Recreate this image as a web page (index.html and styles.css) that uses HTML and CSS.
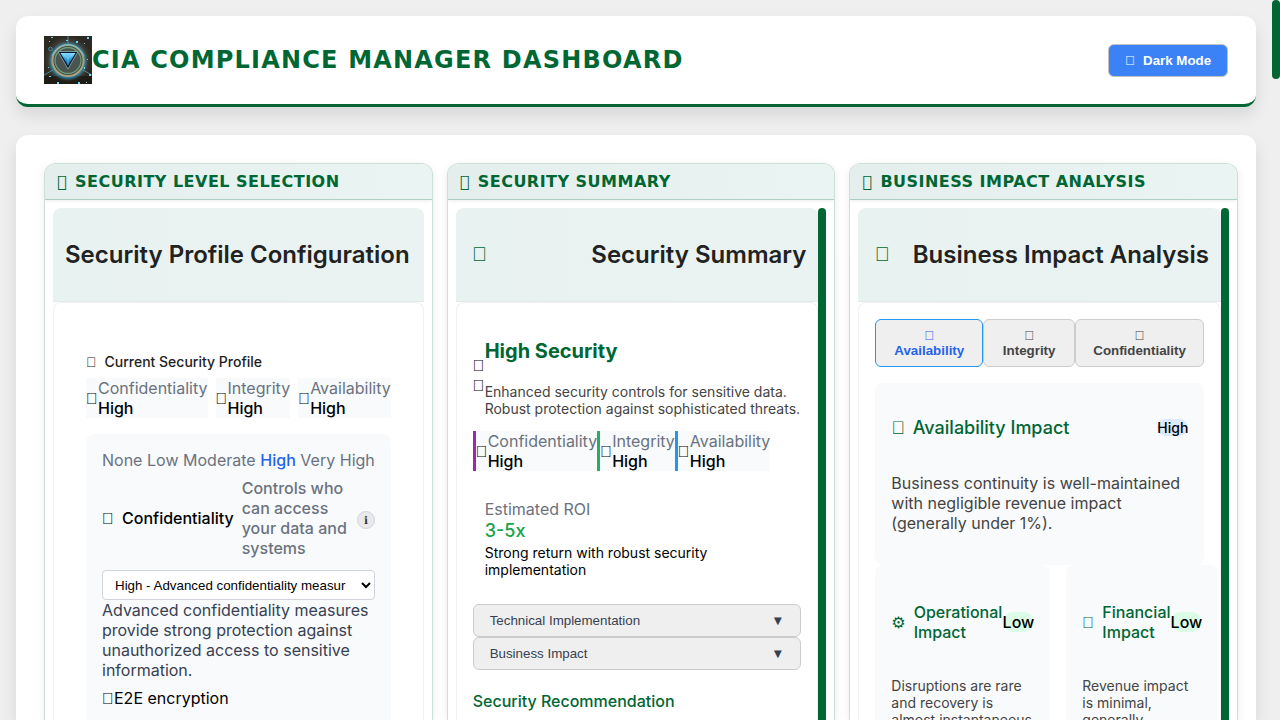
FILE: index.html
```html
<!DOCTYPE html>
<html lang="en">
<head>
<meta charset="utf-8">
<title>CIA Compliance Manager Dashboard</title>
<link rel="stylesheet" href="styles.css">
</head>
<body>
<header class="app-header">
  <svg class="logo" viewBox="0 0 48 48">
    <defs>
      <radialGradient id="bg"><stop offset="0" stop-color="#67777a"/><stop offset=".65" stop-color="#4b4a42"/><stop offset="1" stop-color="#2b2922"/></radialGradient>
      <radialGradient id="glow"><stop offset=".6" stop-color="#2ba8d8" stop-opacity=".1"/><stop offset=".8" stop-color="#35a5d0" stop-opacity=".75"/><stop offset="1" stop-color="#2496c8" stop-opacity="0"/></radialGradient>
      <linearGradient id="tri" x2="0" y2="1"><stop offset="0" stop-color="#8bdcff"/><stop offset=".5" stop-color="#2a9fe0"/><stop offset="1" stop-color="#0b4f86"/></linearGradient>
    </defs>
    <rect width="48" height="48" fill="url(#bg)"/>
    <rect y="40" width="48" height="8" fill="#17140f" opacity=".6"/>
    <path d="M24 0V10M0 39L9 34M48 39L39 34" stroke="#5fc0e0" opacity=".6"/>
    <circle cx="24" cy="25" r="20" fill="url(#glow)"/>
    <circle cx="24" cy="24.500" r="15.500" fill="#34403f" stroke="#a99f7b" stroke-width="2"/>
    <circle cx="24" cy="24.500" r="13" fill="#4a5450" stroke="#6f9b77" stroke-width="1.300"/>
    <path d="M8 20A17 17 0 0 1 40 20" fill="none" stroke="#65cdea" stroke-width=".8"/>
    <path d="M14 15.500H34L24 33Z" fill="#0b1725" stroke="#8ab4bc" stroke-width=".8"/>
    <path d="M16.500 17H31.500L24 29.500Z" fill="url(#tri)"/>
    <path d="M17 17L24 22L31 17M24 22V29" fill="none" stroke="#a6e2f8" stroke-width=".5"/>
    <g fill="#67d5f3"><path d="M7 1h2v1H7zM22 4h2v1h-2zM32 5h2v2h-2zM43 1h2v2h-2zM40 7h1v1h-1zM5 5h1v1H5zM13 46h2v2h-2zM34 46h2v2h-2zM45 38h2v2h-2zM42 46h1v1h-1zM5 40h2v1H5zM4 31h1v1H4zM43 23h1v1h-1zM40 31h1v2h-1z"/></g>
    <circle cx="6.500" cy="13" r="1.800" fill="none" stroke="#318eae"/>
  </svg>
  <h1 class="app-title">CIA Compliance Manager Dashboard</h1>
  <button class="theme-btn"><span class="icon">&#xF0000;</span>Dark Mode</button>
</header>

<main class="board">
  <section class="widget">
    <h2 class="widget-title"><span class="widget-icon">&#xF0000;</span>Security Level Selection</h2>
    <div class="widget-content">
      <div class="pane">
        <div class="pane-head"><h3 class="pane-title">Security Profile Configuration</h3></div>
        <div class="pane-body profile">
          <div class="profile-head"><span class="icon">&#xF0000;</span>Current Security Profile</div>
          <div class="chips spaced">
            <div class="chip"><span class="icon">&#xF0000;</span><div><div class="chip-label">Confidentiality</div><div class="chip-value">High</div></div></div>
            <div class="chip"><span class="icon">&#xF0000;</span><div><div class="chip-label">Integrity</div><div class="chip-value">High</div></div></div>
            <div class="chip"><span class="icon">&#xF0000;</span><div><div class="chip-label">Availability</div><div class="chip-value">High</div></div></div>
          </div>
          <div class="level-box">
            <div class="levels">None Low Moderate <b class="level-active">High</b> Very High</div>
            <div class="level-row">
              <span class="icon">&#xF0000;</span><span class="level-name">Confidentiality</span>
              <span class="level-help">Controls who can access your data and systems</span>
              <span class="info">ℹ</span>
            </div>
            <select class="level-select"><option>High - Advanced confidentiality measures</option></select>
            <p class="level-text">Advanced confidentiality measures provide strong protection against unauthorized access to sensitive information.</p>
            <div class="level-tag"><span class="icon">&#xF0000;</span>E2E encryption</div>
          </div>
        </div>
      </div>
    </div>
  </section>

  <section class="widget">
    <h2 class="widget-title"><span class="widget-icon">&#xF0000;</span>Security Summary</h2>
    <div class="widget-content">
      <div class="pane">
        <div class="pane-head iconed"><span class="icon pane-icon">&#xF0000;</span><h3 class="pane-title">Security Summary</h3></div>
        <div class="pane-body summary">
          <div class="overview">
            <div class="icon overview-icon">&#xF0000;<br>&#xF0000;</div>
            <div>
              <h4 class="overview-title">High Security</h4>
              <p class="overview-text">Enhanced security controls for sensitive data. Robust protection against sophisticated threats.</p>
            </div>
          </div>
          <div class="chips">
            <div class="chip edge purple"><span class="icon">&#xF0000;</span><div><div class="chip-label">Confidentiality</div><div class="chip-value">High</div></div></div>
            <div class="chip edge green"><span class="icon">&#xF0000;</span><div><div class="chip-label">Integrity</div><div class="chip-value">High</div></div></div>
            <div class="chip edge blue"><span class="icon">&#xF0000;</span><div><div class="chip-label">Availability</div><div class="chip-value">High</div></div></div>
          </div>
          <div class="roi">
            <div class="chip-label">Estimated ROI</div>
            <div class="roi-value">3-5x</div>
            <div class="roi-text">Strong return with robust security implementation</div>
          </div>
          <button class="fold"><span>Technical Implementation</span><span class="arrow">▼</span></button>
          <button class="fold"><span>Business Impact</span><span class="arrow">▼</span></button>
          <h4 class="recommend">Security Recommendation</h4>
        </div>
      </div>
      <div class="scroll-thumb"></div>
    </div>
  </section>

  <section class="widget">
    <h2 class="widget-title"><span class="widget-icon">&#xF0000;</span>Business Impact Analysis</h2>
    <div class="widget-content">
      <div class="pane">
        <div class="pane-head iconed"><span class="icon pane-icon">&#xF0000;</span><h3 class="pane-title">Business Impact Analysis</h3></div>
        <div class="pane-body impact">
          <div class="tabs">
            <button class="tab tab-a active"><span class="icon tab-icon">&#xF0000;</span>Availability</button>
            <button class="tab tab-i"><span class="icon tab-icon">&#xF0000;</span>Integrity</button>
            <button class="tab tab-c"><span class="icon tab-icon">&#xF0000;</span>Confidentiality</button>
          </div>
          <div class="impact-card">
            <div class="impact-head"><span class="icon">&#xF0000;</span><h4 class="impact-title">Availability Impact</h4><span class="badge info-badge">High</span></div>
            <p class="impact-text">Business continuity is well-maintained with negligible revenue impact (generally under 1%).</p>
          </div>
          <div class="impact-grid">
            <div class="sub-card">
              <div class="sub-head"><span class="sub-icon gear">⚙</span><h5 class="sub-title">Operational Impact</h5><span class="badge">Low</span></div>
              <p class="sub-text">Disruptions are rare and recovery is almost instantaneous.</p>
            </div>
            <div class="sub-card">
              <div class="sub-head"><span class="icon sub-icon">&#xF0000;</span><h5 class="sub-title">Financial Impact</h5><span class="badge">Low</span></div>
              <p class="sub-text">Revenue impact<br>is minimal,<br>generally</p>
            </div>
          </div>
        </div>
      </div>
      <div class="scroll-thumb"></div>
    </div>
  </section>
</main>
<div class="page-thumb"></div>
</body>
</html>
```
FILE: styles.css
```css
* { box-sizing: border-box; }
html, body { height: 720px; overflow: hidden; }
body { margin: 0; padding: 16px 24px 0 16px; background: #efefef; color: #000; font: 16px/20px Inter, sans-serif; }
h1, h2, h3, h4, h5, p { margin: 0; }
button { font: 13.333px/15px "Liberation Sans", Arial, sans-serif; }
.icon { font-family: "Liberation Sans", Arial, sans-serif; font-weight: 400; }

.app-header { display: flex; align-items: center; height: 91px; padding: 20px 28px; background: #fff; border-bottom: 3px solid #006633; border-radius: 12px; box-shadow: 0 8px 16px rgba(0,0,0,.1); }
.logo { width: 48px; height: 48px; flex: none; }
.app-title { flex: 1; color: #006633; font: bold 24px/28px "DejaVu Sans", sans-serif; letter-spacing: 1.2px; text-transform: uppercase; }
.theme-btn { display: flex; align-items: center; gap: 8px; height: 33px; width: 120px; padding: 0 16px; border: 1px solid #c4c4c4; border-radius: 6px; background: #3b82f6; color: #fff; font-weight: bold; white-space: nowrap; }

.board { display: grid; grid-template-columns: repeat(3, 388.67px); gap: 14px; height: 585px; margin-top: 28px; padding: 28px 28px 0; background: #fff; border-radius: 12px 12px 0 0; box-shadow: 0 8px 16px rgba(0,0,0,.1); }
.widget { display: flex; flex-direction: column; border: 1px solid rgba(0,102,51,.2); border-bottom: 0; border-radius: 12px 12px 0 0; background: #fff; box-shadow: 0 2px 8px rgba(0,0,0,.08); overflow: hidden; min-height: 0; }
.widget-title { display: flex; align-items: center; gap: 8px; height: 36px; padding: 0 12px; background: linear-gradient(90deg, #e4eeec, #eaf4f2); border-bottom: 1px solid rgba(0,102,51,.25); box-shadow: 0 1px 3px rgba(0,0,0,.07); color: #006633; font: bold 16px/20px "DejaVu Sans", sans-serif; letter-spacing: .48px; text-transform: uppercase; flex: none; }
.widget-icon { font-weight: normal; }
.widget-content { display: flex; flex: 1; min-height: 0; padding: 8px 8px 0; }
.pane { flex: 1; min-width: 0; display: flex; flex-direction: column; }
.pane-head { display: flex; align-items: center; flex: none; height: 94px; padding: 0 12px; background: linear-gradient(90deg, #e8f2f0, #eaf3f2); border-bottom: 1px solid #e2eae9; border-radius: 8px 8px 0 0; }
.pane-head.iconed { justify-content: space-between; padding-left: 16px; }
.pane-icon { padding: 0 0 2px .4px; color: #006633; font-size: 20px; }
.pane-title { color: #222; font-size: 24px; line-height: 30px; font-weight: 600; white-space: nowrap; }
.pane-body { flex: 1; min-height: 0; border: 1px solid #f0f2f2; border-bottom: 0; border-radius: 8px 8px 0 0; }
.scroll-thumb { width: 8px; border-radius: 4px 4px 0 0; background: #006633; }
.page-thumb { position: fixed; top: 0; right: 0; width: 8px; height: 79px; border-radius: 4px; background: #006633; }

.profile { padding: 49px 32px 0; display: flex; flex-direction: column; }
.profile-head { display: flex; gap: 8px; color: #222; font-size: 14px; font-weight: 500; }
.chips { display: flex; }
.chips.spaced { gap: 8px; margin: 6px 0 16px; }
.chip { display: flex; align-items: center; height: 40px; background: #f8fafc; white-space: nowrap; }
.chip > .icon, .level-row > .icon { padding-top: 2px; }
.chip.edge { border-left: 3px solid; }
.chip.purple { border-color: #9c27b0; }
.chip.green { border-color: #27ae60; }
.chip.blue { border-color: #2196f3; }
.chip-label { color: #6b7280; }
.chip-value { font-weight: 500; }
.level-box { width: 305px; flex: 1; padding: 16px 16px 0; border-radius: 8px 8px 0 0; background: #f8fafc; }
.levels { color: #6b7280; white-space: nowrap; word-spacing: .1px; }
.level-active { color: #2563eb; font-weight: 500; }
.level-row { display: flex; align-items: center; gap: 8px; margin: 8px 0 12px; font-weight: 500; }
.level-help { flex: 1; color: #6b7280; }
.info { width: 18px; height: 18px; margin-top: 4px; border: 1px solid #d5d5d5; border-radius: 50%; background: #e9e9e9; color: #333; font: bold 10.500px/16px "DejaVu Sans", sans-serif; text-align: center; }
.level-select { display: block; width: 273px; height: 30px; padding: 0 12px 0 8px; border: 1px solid #d1d5db; border-radius: 4px; background: #fff; color: #000; font: 13.333px "Liberation Sans", Arial, sans-serif; }
.level-text { color: #374151; }
.level-tag { display: flex; margin-top: 8px; }
.level-tag > .icon { padding-top: 1px; }

.summary { padding: 36px 16px 0; }
.overview { display: flex; align-items: center; }
.overview-icon { width: 12px; margin-top: -4px; }
.overview-title { color: #006633; font-size: 20px; line-height: 24px; font-weight: 700; }
.overview-text { margin: 20px -8px 0 0; color: #444; font-size: 14px; line-height: 17px; }
.summary .chips { margin-top: 14px; }
.roi { margin-top: 28px; padding: 0 12px; }
.roi-value { color: #16a34a; font-size: 18px; line-height: 23px; font-weight: 500; }
.roi-text { margin: 2px 0 26px; font-size: 14px; line-height: 17px; }
.fold { display: flex; justify-content: space-between; align-items: center; width: 328px; height: 33px; padding: 0 16px; border: 1px solid #ccc; border-radius: 6px; background: #efefef; color: #374151; }
.arrow { margin-right: -.8px; }
.recommend { margin-top: 21px; color: #006633; font-size: 16px; font-weight: 500; }

.impact { padding: 16px 16px 0; display: flex; flex-direction: column; }
.tabs { display: flex; flex: none; }
.tab { height: 48px; padding: 0; border: 1px solid #ccc; border-radius: 6px; background: #efefef; color: #444; font-weight: bold; }
.tab.active { border-color: #2196f3; color: #2563eb; }
.tab-icon { display: block; }
.tab-a { width: 108px; }
.tab-i { width: 92px; }
.tab-c { width: 129px; }
.impact-card { flex: none; width: 329px; height: 182px; margin-top: 16px; padding: 34px 16px 0; border-radius: 8px; background: #f8fafc; }
.impact-head { display: flex; align-items: center; gap: 8px; height: 22px; color: #006633; font-size: 18px; }
.impact-title { flex: 1; font-size: 18px; font-weight: 500; }
.badge { border-radius: 10px; background: #dcfce7; color: #000; font-size: 16px; line-height: 20px; font-weight: 500; }
.info-badge { background: #dbeafe; font-size: 14px; line-height: 17px; margin-bottom: 1px; }
.impact-text { margin-top: 34px; color: #444; }
.impact-grid { display: grid; grid-template-columns: 175px 152px; gap: 16px; flex: 1; min-height: 0; }
.sub-card { min-height: 0; padding: 37px 16px 0; border-radius: 8px 8px 0 0; background: #f8fafc; }
.sub-head { display: flex; align-items: center; height: 40px; color: #006633; white-space: nowrap; }
.sub-icon { margin-right: 8px; padding-top: 2px; }
.gear { font-family: "DejaVu Sans", sans-serif; }
.sub-title { font-size: 16px; font-weight: 500; white-space: normal; }
.sub-head .badge { margin-left: -.4px; }
.sub-text { margin: 35px -2px 0 0; color: #444; font-size: 14px; line-height: 17px; }
```
